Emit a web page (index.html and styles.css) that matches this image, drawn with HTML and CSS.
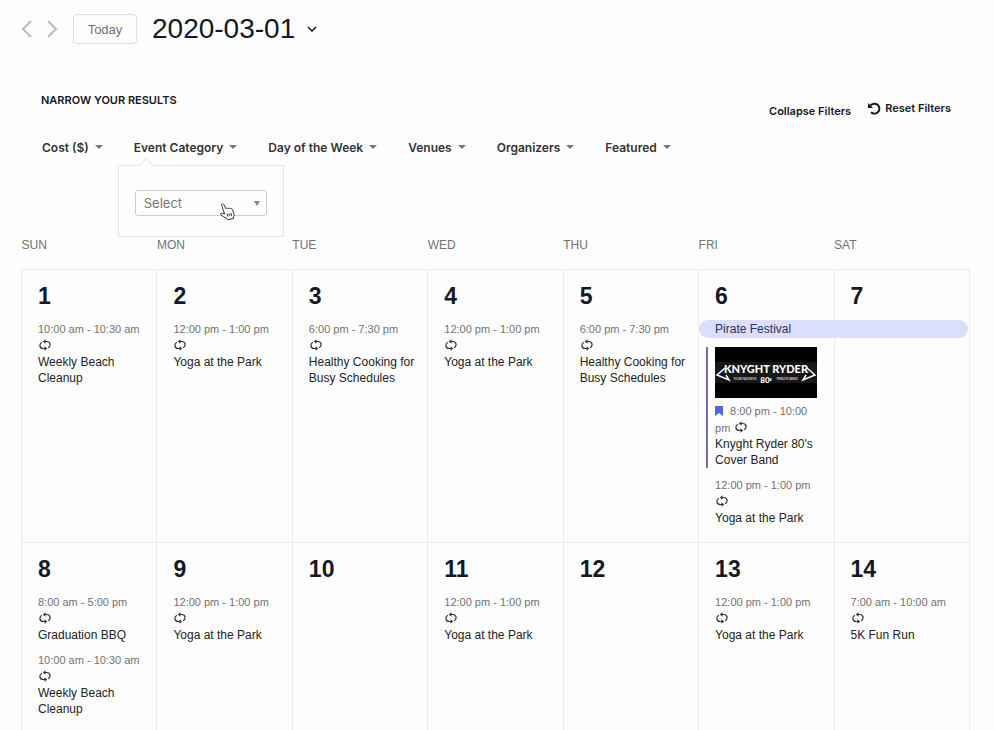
FILE: index.html
```html
<!DOCTYPE html>
<html lang="en">
<head>
  <meta charset="UTF-8" />
  <meta name="viewport" content="width=device-width, initial-scale=1.0"/>
  <title>Events Calendar</title>
  <link rel="stylesheet" href="styles.css">
</head>
<body>
  <!-- shared icons -->
  <svg class="sprite" aria-hidden="true">
    <symbol id="recur" viewBox="0 0 12 12">
      <path d="M6 2.500H7.500C12 2.500 12 7.500 9 8.800M6 9.500H4.500C0 9.500 0 4.500 3 3.200" fill="none" stroke="currentColor" stroke-width="1.200"/>
      <path d="M6.500.3v4.400L3.800 2.500zM5.500 7.300v4.400L8.200 9.500z" fill="currentColor"/>
    </symbol>
  </svg>

  <header class="top-bar">
    <button class="nav-btn" aria-label="Previous month"><svg width="12" height="18" viewBox="0 0 12 18"><path d="M10 1L2 9l8 8"/></svg></button>
    <button class="nav-btn" aria-label="Next month"><svg width="12" height="18" viewBox="0 0 12 18"><path d="M2 1l8 8-8 8"/></svg></button>
    <button class="today">Today</button>
    <button class="date-picker">2020-03-01 <svg width="10" height="6" viewBox="0 0 10 6"><path d="M1 1l4 4 4-4"/></svg></button>
  </header>

  <section class="filters">
    <div class="filters-head">
      <h2>NARROW YOUR RESULTS</h2>
      <button class="collapse">Collapse Filters</button>
      <button class="reset">
        <svg width="13" height="13" viewBox="0 0 13 13"><path d="M2.500 3.500A5 5 0 1 1 3 10.300" fill="none" stroke="currentColor" stroke-width="2"/><path d="M0 1v5h5z" fill="currentColor"/></svg>
        Reset Filters
      </button>
    </div>
    <div class="filter-list">
      <button>Cost ($)</button>
      <div class="filter-open">
        <button>Event Category</button>
        <div class="dropdown">
          <select aria-label="Event Category"><option>Select</option></select>
          <svg class="pointer" width="16" height="18" viewBox="0 0 16 18"><path d="M1.600 2.200C1 .8 3 .2 3.800 1.500L6 5.800c.2-1 1.700-1.100 2.100-.1.400-.8 1.700-.8 2.100.2.500-.7 1.800-.5 2.100.6l1.500 3.600c.6 1.600 0 3-.4 4l.2 1.400-6 1.300-.9-1.400C4.800 14.600 3 13.400 1 12c-1.200-1 .1-2.200 1.600-1.600l2 .7z" fill="#fff" stroke="#333"/><path d="M7 10.500l.500 3M9 10.300l.500 3M11 10l.500 3" stroke="#333"/></svg>
        </div>
      </div>
      <button>Day of the Week</button>
      <button>Venues</button>
      <button>Organizers</button>
      <button>Featured</button>
    </div>
  </section>

  <table class="calendar">
    <thead>
      <tr><th>SUN</th><th>MON</th><th>TUE</th><th>WED</th><th>THU</th><th>FRI</th><th>SAT</th></tr>
    </thead>
    <tbody>
      <tr>
        <td>
          <h3>1</h3>
          <article>
            <time>10:00 am - 10:30 am</time>
            <svg class="recur"><use href="#recur"/></svg>
            <a href="#">Weekly Beach Cleanup</a>
          </article>
        </td>
        <td>
          <h3>2</h3>
          <article>
            <time>12:00 pm - 1:00 pm</time>
            <svg class="recur"><use href="#recur"/></svg>
            <a href="#">Yoga at the Park</a>
          </article>
        </td>
        <td>
          <h3>3</h3>
          <article>
            <time>6:00 pm - 7:30 pm</time>
            <svg class="recur"><use href="#recur"/></svg>
            <a href="#">Healthy Cooking for Busy Schedules</a>
          </article>
        </td>
        <td>
          <h3>4</h3>
          <article>
            <time>12:00 pm - 1:00 pm</time>
            <svg class="recur"><use href="#recur"/></svg>
            <a href="#">Yoga at the Park</a>
          </article>
        </td>
        <td>
          <h3>5</h3>
          <article>
            <time>6:00 pm - 7:30 pm</time>
            <svg class="recur"><use href="#recur"/></svg>
            <a href="#">Healthy Cooking for Busy Schedules</a>
          </article>
        </td>
        <td>
          <h3>6</h3>
          <a class="multiday" href="#">Pirate Festival</a>
          <article class="featured">
            <svg class="band" viewBox="0 0 102 51" role="img" aria-label="Knyght Ryder">
              <rect width="102" height="51" fill="#000"/>
              <rect y="15" width="102" height="21" fill="#171717"/>
              <path d="M10 21L2 28l12 5-3-5M92 21l8 7-12 5 3-5" fill="none" stroke="#fff" stroke-width="1.500"/>
              <text class="band-name" x="51" y="26" text-anchor="middle">KNYGHT RYDER</text>
              <text class="band-small" x="30" y="33" text-anchor="middle">YOUR FAVORITE</text>
              <text class="band-80" x="51" y="36" text-anchor="middle">80<tspan class="band-sup" dy="-2">s</tspan></text>
              <text class="band-small" x="72" y="33" text-anchor="middle">TRIBUTE BAND</text>
            </svg>
            <time><svg class="bookmark" viewBox="0 0 8 10"><path d="M0 0h8v10L4 7l-4 3z"/></svg>8:00 pm - 10:00 pm</time>
            <svg class="recur"><use href="#recur"/></svg>
            <a href="#">Knyght Ryder 80's Cover Band</a>
          </article>
          <article>
            <time>12:00 pm - 1:00 pm</time>
            <svg class="recur"><use href="#recur"/></svg>
            <a href="#">Yoga at the Park</a>
          </article>
        </td>
        <td>
          <h3>7</h3>
        </td>
      </tr>
      <tr>
        <td>
          <h3>8</h3>
          <article>
            <time>8:00 am - 5:00 pm</time>
            <svg class="recur"><use href="#recur"/></svg>
            <a href="#">Graduation BBQ</a>
          </article>
          <article>
            <time>10:00 am - 10:30 am</time>
            <svg class="recur"><use href="#recur"/></svg>
            <a href="#">Weekly Beach Cleanup</a>
          </article>
        </td>
        <td>
          <h3>9</h3>
          <article>
            <time>12:00 pm - 1:00 pm</time>
            <svg class="recur"><use href="#recur"/></svg>
            <a href="#">Yoga at the Park</a>
          </article>
        </td>
        <td>
          <h3>10</h3>
        </td>
        <td>
          <h3>11</h3>
          <article>
            <time>12:00 pm - 1:00 pm</time>
            <svg class="recur"><use href="#recur"/></svg>
            <a href="#">Yoga at the Park</a>
          </article>
        </td>
        <td>
          <h3>12</h3>
        </td>
        <td>
          <h3>13</h3>
          <article>
            <time>12:00 pm - 1:00 pm</time>
            <svg class="recur"><use href="#recur"/></svg>
            <a href="#">Yoga at the Park</a>
          </article>
        </td>
        <td>
          <h3>14</h3>
          <article>
            <time>7:00 am - 10:00 am</time>
            <svg class="recur"><use href="#recur"/></svg>
            <a href="#">5K Fun Run</a>
          </article>
        </td>
      </tr>
    </tbody>
  </table>
</body>
</html>
```
FILE: styles.css
```css
* {
  box-sizing: border-box;
}
body {
  font-family: "Liberation Sans", Arial, sans-serif;
  background: #fefefe;
  color: #141827;
  margin: 0;
  padding: 13px 24px 0 21px;
}
button {
  font-family: inherit;
  color: inherit;
  background: none;
  border: none;
  padding: 0;
  cursor: pointer;
}
.sprite {
  display: none;
}

/* top bar */
.top-bar {
  display: flex;
  align-items: center;
  height: 32px;
}
.nav-btn {
  width: 12px;
  height: 18px;
  margin-right: 13px;
}
.nav-btn svg {
  display: block;
  fill: none;
  stroke: #bababa;
  stroke-width: 2;
}
.today {
  width: 64px;
  height: 30px;
  margin-left: 2px;
  border: 1px solid #dedede;
  border-radius: 4px;
  font-size: 13px;
  color: #727272;
}
.date-picker {
  display: flex;
  align-items: center;
  gap: 12px;
  margin-left: 15px;
  font-size: 28px;
}
.date-picker svg {
  fill: none;
  stroke: #141827;
  stroke-width: 1.5;
}

/* filters */
.filters {
  margin-top: 48px;
  padding: 0 19px 0 20px;
  border-top: 1px solid #f8f8f8;
  font-family: Inter, sans-serif;
}
.filters-head {
  display: flex;
  align-items: flex-start;
  height: 44px;
}
.filters-head h2 {
  margin: 0 auto 0 0;
  font-size: 11px;
  line-height: 12px;
  font-weight: 600;
}
.filters-head button {
  font-size: 11px;
  line-height: 14px;
  font-weight: 600;
}
.collapse {
  margin-top: 10px;
}
.reset {
  display: flex;
  align-items: center;
  gap: 4px;
  margin: 7px 0 0 17px;
}
.filter-list {
  display: flex;
  gap: 31px;
  height: 99px;
  padding-left: 1px;
}
.filter-list button {
  display: flex;
  align-items: center;
  gap: 6px;
  height: 18px;
  font-size: 12px;
  font-weight: 600;
  color: #333;
}
.filter-list button::after {
  content: "";
  border: 4px solid transparent;
  border-top-color: #777;
  border-bottom: 0;
}
.filter-open {
  position: relative;
}
.dropdown {
  position: absolute;
  top: 27px;
  left: -16px;
  width: 166px;
  height: 72px;
  padding: 24px 16px;
  background: #fefefe;
  border: 1px solid #e6e6e6;
}
.dropdown::before {
  content: "";
  position: absolute;
  top: -6px;
  left: 22px;
  width: 10px;
  height: 10px;
  background: #fefefe;
  border: 1px solid #e6e6e6;
  border-width: 1px 0 0 1px;
  transform: rotate(45deg);
}
.dropdown select {
  appearance: none;
  display: block;
  width: 100%;
  height: 26px;
  padding: 0 8px;
  border: 1px solid #ccc;
  border-radius: 3px;
  background: #fefefe;
  font-family: inherit;
  font-size: 13px;
  color: #777;
}
.dropdown::after {
  content: "";
  position: absolute;
  top: 35px;
  right: 23px;
  border: 3px solid transparent;
  border-top: 5px solid #888;
  border-bottom: 0;
}
.pointer {
  position: absolute;
  top: 37px;
  left: 101px;
}

/* calendar */
.calendar {
  width: 100%;
  table-layout: fixed;
  border-collapse: collapse;
}
.calendar th {
  height: 32px;
  padding: 0;
  text-align: left;
  vertical-align: top;
  font-size: 12px;
  line-height: 16px;
  font-weight: normal;
  color: #727272;
}
.calendar td {
  height: 273px;
  padding: 14px 12px 0 16px;
  border: 1px solid #ebebeb;
  vertical-align: top;
}
.calendar h3 {
  margin: 0 0 13px;
  font-size: 23px;
  line-height: 24px;
}
article {
  margin-bottom: 9px;
  font-size: 12px;
  line-height: 16px;
}
article time {
  font-size: 11px;
  color: #727272;
}
article a {
  display: block;
  color: #222;
  text-decoration: none;
}
.recur {
  display: block;
  width: 12px;
  height: 12px;
  margin: 2px 1px 3px;
  color: #333;
}
.multiday {
  display: block;
  position: relative;
  width: calc(200% + 56px);
  height: 18px;
  margin: -1px 0 9px -16px;
  padding-left: 16px;
  border-radius: 9px;
  background: #dadeff;
  font-size: 12px;
  line-height: 18px;
  color: #2c3153;
  text-decoration: none;
}
.featured {
  margin-left: -9px;
  padding-left: 7px;
  border-left: 2px solid #6a70b0;
}
.featured .recur {
  display: inline-block;
  margin: 2px 1px 0;
  vertical-align: -1px;
}
.band {
  display: block;
  width: 102px;
  height: 51px;
  margin-bottom: 5px;
}
.band text {
  fill: #fff;
  font-family: Lato, sans-serif;
  font-weight: 900;
}
.band .band-name {
  font-size: 11px;
}
.band .band-small {
  font-size: 3px;
  font-weight: 400;
}
.band .band-80 {
  font-size: 8px;
}
.band .band-sup {
  font-size: 5px;
}
.bookmark {
  width: 8px;
  height: 10px;
  margin-right: 7px;
  vertical-align: -1px;
  fill: #5264e8;
}
```
